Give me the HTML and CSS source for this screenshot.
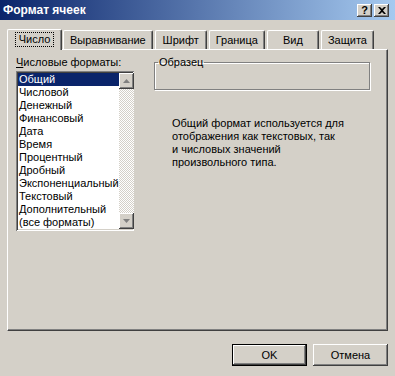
FILE: index.html
```html
<!DOCTYPE html>
<html lang="ru">
<head>
  <meta charset="UTF-8" />
  <title>Формат ячеек</title>
  <link rel="stylesheet" href="styles.css">
</head>
<body>
  <div class="window">
    <div class="titlebar">
      <span class="title">Формат ячеек</span>
      <div class="title-buttons">
        <div class="tb-btn">?</div>
        <div class="tb-btn">
          <svg width="8" height="7" viewBox="0 0 8 7"><path d="M0 0h2l2 2 2-2h2L5 3.5 8 7H6L4 5 2 7H0l3-3.5z" fill="#000"/></svg>
        </div>
      </div>
    </div>

    <div class="tabs">
      <div class="tab active"><span class="focus">Число</span></div>
      <div class="tab">Выравнивание</div>
      <div class="tab">Шрифт</div>
      <div class="tab">Граница</div>
      <div class="tab">Вид</div>
      <div class="tab">Защита</div>
    </div>

    <div class="panel">
      <div class="formats">
        <div class="label"><u>Ч</u>исловые форматы:</div>
        <div class="listbox">
          <ul class="items">
            <li class="selected">Общий</li>
            <li>Числовой</li>
            <li>Денежный</li>
            <li>Финансовый</li>
            <li>Дата</li>
            <li>Время</li>
            <li>Процентный</li>
            <li>Дробный</li>
            <li>Экспоненциальный</li>
            <li>Текстовый</li>
            <li>Дополнительный</li>
            <li>(все форматы)</li>
          </ul>
          <div class="scrollbar">
            <div class="sb-btn">
              <svg width="7" height="4" viewBox="0 0 7 4"><path d="M3.5 0L7 4H0z" fill="#808080"/></svg>
            </div>
            <div class="sb-track"></div>
            <div class="sb-btn">
              <svg width="7" height="4" viewBox="0 0 7 4"><path d="M0 0h7L3.5 4z" fill="#808080"/></svg>
            </div>
          </div>
        </div>
      </div>

      <div class="details">
        <fieldset class="sample">
          <legend>Образец</legend>
        </fieldset>
        <p class="desc">Общий формат используется для отображения как текстовых, так<br>и числовых значений произвольного типа.</p>
      </div>
    </div>

    <div class="footer">
      <div class="btn default">OK</div>
      <div class="btn">Отмена</div>
    </div>
  </div>
</body>
</html>
```

FILE: styles.css
```css
/* Reset & Base */
* {
  box-sizing: border-box;
  margin: 0;
  padding: 0;
}

body {
  font-family: 'Liberation Sans', Arial, sans-serif;
  font-size: 11px;
  color: #000;
  background: #d4d0c8;
}

.window {
  width: 395px;
  height: 376px;
  background: #d4d0c8;
  overflow: hidden;
}

/* Title bar */
.titlebar {
  height: 20px;
  display: flex;
  align-items: center;
  justify-content: space-between;
  padding: 0 6px 0 3px;
  background: linear-gradient(to right, #0a246a, #a6caf0);
}

.title {
  color: #fff;
  font-weight: bold;
  font-size: 12px;
}

.title-buttons {
  display: flex;
  gap: 2px;
}

.tb-btn {
  width: 15px;
  height: 13px;
  display: flex;
  align-items: center;
  justify-content: center;
  background: #d4d0c8;
  font-weight: bold;
  font-size: 11px;
  box-shadow: inset -1px -1px #404040, inset 1px 1px #fff, inset -2px -2px #808080;
}

/* Tabs */
.tabs {
  display: flex;
  align-items: flex-end;
  margin-top: 8px;
  padding-left: 7px;
  height: 21px;
}

.tab {
  height: 19px;
  min-width: 52px;
  padding: 0 6px;
  display: flex;
  align-items: center;
  justify-content: center;
  margin-right: 2px;
  border-top: 1px solid #fff;
  border-left: 1px solid #fff;
  border-right: 1px solid #404040;
  border-radius: 2px 2px 0 0;
  box-shadow: inset -1px 0 #808080;
}

.tab.active {
  height: 21px;
  min-width: 55px;
  margin-right: 1px;
  position: relative;
  z-index: 1;
  background: #d4d0c8;
  margin-bottom: -1px;
  padding-bottom: 1px;
}

.focus {
  border: 1px dotted #000;
  padding: 0 3px;
  line-height: 13px;
}

/* Panel */
.panel {
  height: 282px;
  margin-left: 7px;
  width: 381px;
  display: flex;
  gap: 20px;
  padding: 6px 8px;
  border-top: 1px solid #fff;
  border-left: 1px solid #fff;
  border-right: 1px solid #404040;
  border-bottom: 1px solid #404040;
  box-shadow: inset -1px -1px #808080;
}

.label {
  line-height: 13px;
  margin-bottom: 2px;
}

.listbox {
  width: 118px;
  height: 160px;
  display: flex;
  padding: 2px 0 2px 2px;
  background: #fff;
  box-shadow: inset 1px 1px #808080, inset -1px -1px #fff, inset 2px 2px #404040, inset -2px -2px #d4d0c8;
}

.items {
  list-style: none;
  flex: 1;
}

.items li {
  height: 13px;
  line-height: 13px;
  padding-left: 1px;
  white-space: nowrap;
}

.items li.selected {
  background: #0a246a;
  color: #fff;
}

.scrollbar {
  width: 16px;
  display: flex;
  flex-direction: column;
}

.sb-btn {
  height: 16px;
  display: flex;
  align-items: center;
  justify-content: center;
  background: #d4d0c8;
  box-shadow: inset -1px -1px #404040, inset 1px 1px #fff, inset -2px -2px #808080;
}

.sb-track {
  flex: 1;
  background-image: repeating-conic-gradient(#fff 0 25%, #d4d0c8 0 50%);
  background-size: 2px 2px;
}

/* Details */
.sample {
  width: 216px;
  height: 34px;
  border: 1px solid #808080;
  box-shadow: inset 1px 1px #fff, 1px 1px #fff;
  padding: 0;
}

.sample legend {
  margin-left: 3px;
  padding: 0 1px;
  line-height: 13px;
}

.desc {
  margin: 27px 0 0 18px;
  width: 178px;
  line-height: 13px;
}

/* Footer */
.footer {
  display: flex;
  justify-content: flex-end;
  gap: 6px;
  padding-right: 7px;
  margin-top: 13px;
}

.btn {
  width: 75px;
  height: 22px;
  display: flex;
  align-items: center;
  justify-content: center;
  background: #d4d0c8;
  box-shadow: inset -1px -1px #404040, inset 1px 1px #fff, inset -2px -2px #808080;
}

.btn.default {
  border: 1px solid #000;
}
```
